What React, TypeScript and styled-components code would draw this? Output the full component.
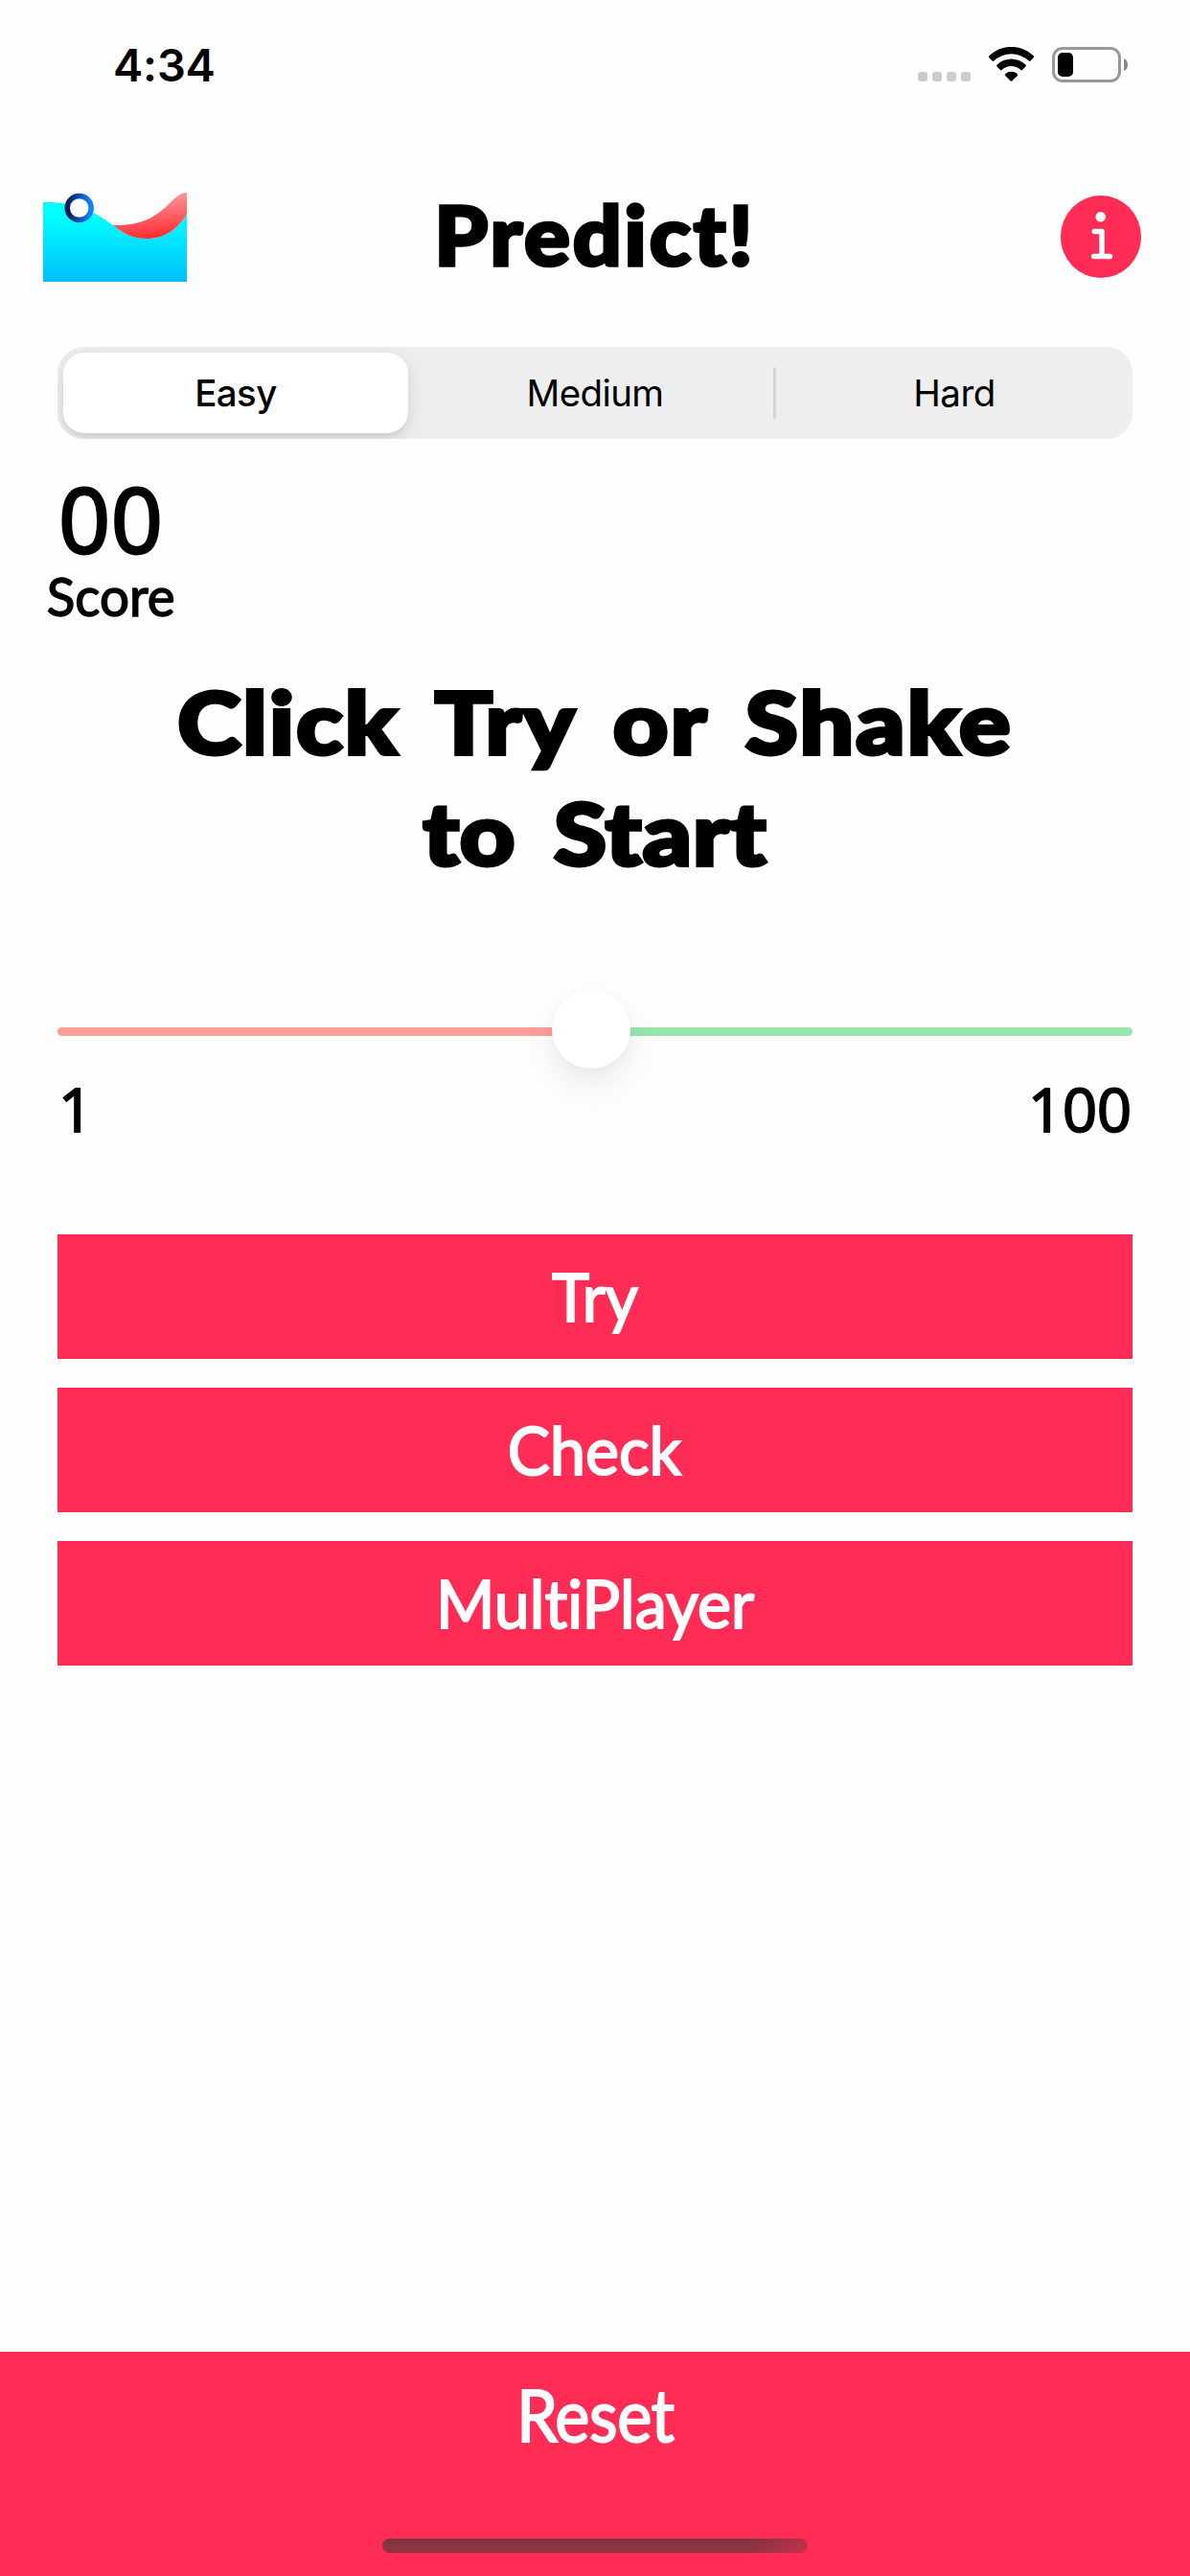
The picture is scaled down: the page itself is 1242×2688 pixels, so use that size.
import React, { useState } from "react";
import styled, { createGlobalStyle } from "styled-components";

const pink = "#ff2d55";

const GlobalStyle = createGlobalStyle`
  * { box-sizing: border-box; }
  body { margin: 0; background: #fff; }
`;

const Screen = styled.div`
  width: 1242px;
  height: 2688px;
  display: flex;
  flex-direction: column;
  overflow: hidden;
  background: #fefefe;
  color: #000;
  font-family: Lato, "Open Sans", sans-serif;
  font-variant-ligatures: none;
`;

const StatusBar = styled.div`
  height: 135px;
  flex: none;
  padding: 0 64px 0 118px;
  display: flex;
  align-items: center;
  justify-content: space-between;
`;

const Time = styled.span`
  font: 600 47px/56px Inter, sans-serif;
  letter-spacing: -0.2px;
`;

const Header = styled.header`
  height: 224px;
  flex: none;
  padding: 0 51px 0 45px;
  display: grid;
  grid-template-columns: 150px 1fr 84px;
  align-items: center;
`;

const Title = styled.h1`
  margin: 0;
  padding: 0 0 6px 0;
  text-align: center;
  font-weight: 900;
  font-size: 86px;
  line-height: 100px;
  letter-spacing: 2.7px;
  -webkit-text-stroke: 3.5px #000;
  transform: translateX(-30px) scaleX(1.04);
`;

const Segments = styled.div`
  margin: 3px 60px 0;
  height: 96px;
  flex: none;
  padding: 6px;
  display: grid;
  grid-template-columns: 360px 381px 3px 366px;
  align-items: center;
  border-radius: 27px;
  background: #eee;
  overflow: hidden;
`;

const Segment = styled.button<{ $active?: boolean; $inset?: number }>`
  height: 84px;
  padding: 0 0 0 ${(p) => p.$inset ?? 0}px;
  border: 0;
  border-radius: 22px;
  background: ${(p) => (p.$active ? "#fff" : "transparent")};
  box-shadow: ${(p) => (p.$active ? "0 6px 18px rgba(0,0,0,.12), 0 4px 4px rgba(0,0,0,.04)" : "none")};
  font: ${(p) => (p.$active ? 500 : 400)} 38.5px/48px Inter, sans-serif;
  letter-spacing: -0.6px;
  color: #000;
`;

const Divider = styled.span`
  width: 3px;
  height: 54px;
  border-radius: 2px;
  background: #d5d5d5;
`;

const ScoreBox = styled.section`
  margin: 33px 0 0 36px;
  width: 160px;
  flex: none;
  display: flex;
  flex-direction: column;
  align-items: center;
`;

const ScoreValue = styled.span`
  font-family: "Open Sans", sans-serif;
  font-weight: 500;
  font-size: 94px;
  line-height: 100px;
  letter-spacing: 1px;
  -webkit-text-stroke: 3px #000;
`;

const ScoreLabel = styled.span`
  font-size: 57px;
  line-height: 60px;
  -webkit-text-stroke: 1.5px #000;
  transform: scaleX(0.96);
`;

const Prompt = styled.h2`
  margin: 43px 0 0;
  flex: none;
  text-align: center;
  font-weight: 900;
  font-size: 90px;
  line-height: 116px;
  word-spacing: 13px;
  -webkit-text-stroke: 4px #000;
`;

const PromptLine = styled.span<{ $spacing: number }>`
  display: block;
  letter-spacing: ${(p) => p.$spacing}px;
  transform: scaleX(1.11);
`;

const Slider = styled.div`
  margin: 107px 60px 0;
  height: 82px;
  flex: none;
  display: flex;
  align-items: center;
`;

const Track = styled.div<{ $color: string; $left?: boolean }>`
  height: 9px;
  margin-top: 4px;
  flex: ${(p) => (p.$left ? "0 0 520px" : "1")};
  border-radius: ${(p) => (p.$left ? "5px 0 0 5px" : "0 5px 5px 0")};
  background: ${(p) => p.$color};
`;

const Thumb = styled.div`
  width: 82px;
  height: 82px;
  flex: none;
  margin: 0 -4px;
  position: relative;
  border-radius: 50%;
  background: #fff;
  box-shadow: 0 18px 38px rgba(0, 0, 0, 0.08), 0 2px 10px rgba(0, 0, 0, 0.04);
`;

const Range = styled.div`
  margin: 4px 61px 0 61px;
  height: 76px;
  flex: none;
  display: flex;
  justify-content: space-between;
  font-family: "Open Sans", sans-serif;
  font-weight: 500;
  font-size: 63px;
  line-height: 76px;
  -webkit-text-stroke: 2px #000;
`;

const Actions = styled.div`
  margin: 93px 60px 0;
  flex: none;
  display: flex;
  flex-direction: column;
  gap: 30px;
`;

const Action = styled.button`
  height: 130px;
  padding: 0;
  border: 0;
  background: ${pink};
  color: #fff;
  font: 400 69px/80px Lato, sans-serif;
  font-variant-ligatures: none;
  -webkit-text-stroke: 2px #fff;
`;

const ActionLabel = styled.span`
  display: inline-block;
  transform: scaleX(0.96);
`;

const Footer = styled.footer`
  margin-top: auto;
  height: 234px;
  flex: none;
  display: flex;
  flex-direction: column;
  align-items: center;
  background: ${pink};
`;

const Reset = styled.button`
  height: 130px;
  padding: 0;
  border: 0;
  background: none;
  color: #fff;
  font: 400 76px/90px Lato, sans-serif;
  letter-spacing: -0.5px;
  -webkit-text-stroke: 2px #fff;
  transform: scaleX(0.9);
`;

const HomeIndicator = styled.div`
  width: 444px;
  height: 15px;
  margin-top: 65px;
  border-radius: 8px;
  background: linear-gradient(100deg, transparent 86%, rgba(255, 45, 85, 0.5) 100%),
    linear-gradient(#783540, #953345);
`;

const StatusIcons = () => (
  <svg width="220" height="37" viewBox="958 49 220 37">
    {[958, 973, 988, 1003].map((x) => (
      <rect key={x} x={x} y="75" width="10" height="10" rx="3" fill="#ccc" />
    ))}
    <path d="M1032.3 58.2Q1031.3 59.2 1032.3 60.2L1035.6 63.6Q1036.4 64.4 1037.2 63.6A26.5 26.5 0 0 1 1073.8 63.6Q1074.600 64.4 1075.4 63.6L1078.700 60.2Q1079.700 59.2 1078.700 58.2A33.500 33.500 0 0 0 1032.3 58.2Z" />
    <path d="M1040.600 67.500Q1039.600 68.500 1040.600 69.500L1044 73Q1044.800 73.800 1045.600 73A14.500 14.500 0 0 1 1065.400 73Q1066.200 73.800 1067 73L1070.400 69.500Q1071.400 68.500 1070.400 67.500A21.500 21.500 0 0 0 1040.600 67.500Z" />
    <path d="M1049.200 77Q1048.400 78 1049.200 78.900L1054.700 84.400Q1055.500 85.200 1056.300 84.400L1061.800 78.900Q1062.600 78 1061.800 77A10 10 0 0 0 1049.200 77Z" />
    <rect x="1099.500" y="50.500" width="69" height="34" rx="9.500" fill="none" stroke="#999" strokeWidth="3" />
    <rect x="1104" y="55" width="16" height="25" rx="5" />
    <path d="M1173 61Q1177 63 1177 67.500T1173 74Z" fill="#888" />
  </svg>
);

const Logo = () => (
  <svg width="150" height="93" viewBox="45 201 150 93">
    <defs>
      <linearGradient id="sea" x1="0" y1="0" x2="0" y2="1">
        <stop offset=".15" stopColor="#0ff" />
        <stop offset="1" stopColor="#00c0ff" />
      </linearGradient>
      <linearGradient id="sail" x1=".35" y1=".15" x2=".5" y2="1">
        <stop offset="0" stopColor="#ff9094" />
        <stop offset="1" stopColor="#ff2a2e" />
      </linearGradient>
      <linearGradient id="ring" x1="0" y1="0" x2="1" y2="0">
        <stop offset=".05" stopColor="#00205a" />
        <stop offset=".95" stopColor="#1482ff" />
      </linearGradient>
    </defs>
    <path d="M45 211C72 210.500 92 216 118 235C129 244 139 249 153 249C172 249 186 239 195 223V294H45Z" fill="url(#sea)" />
    <path d="M118 235C143 236 158 229 172 217C182 207 188 201 195 201V223C186 239 172 249 153 249C139 249 129 244 118 235Z" fill="url(#sail)" />
    <circle cx="82.700" cy="217" r="12.500" fill="#fff" stroke="url(#ring)" strokeWidth="5.500" />
  </svg>
);

const InfoIcon = () => (
  <svg width="84" height="86" viewBox="1107 204 84 86">
    <ellipse cx="1149" cy="247" rx="42" ry="43" fill={pink} />
    <circle cx="1148.700" cy="226.300" r="5.200" fill="#fff" />
    <path d="M1142.300 241.500H1150V267.500M1141.700 267.500H1158.500" fill="none" stroke="#fff" strokeWidth="5.500" strokeLinecap="round" strokeLinejoin="round" />
  </svg>
);

export default function App() {
  const [level, setLevel] = useState("Easy");
  return (
    <>
      <GlobalStyle />
      <Screen>
        <StatusBar>
          <Time>4:34</Time>
          <StatusIcons />
        </StatusBar>
        <Header>
          <Logo />
          <Title>Predict!</Title>
          <InfoIcon />
        </Header>
        <Segments>
          <Segment $active={level === "Easy"} onClick={() => setLevel("Easy")}>Easy</Segment>
          <Segment $inset={9} $active={level === "Medium"} onClick={() => setLevel("Medium")}>Medium</Segment>
          <Divider />
          <Segment $inset={6} $active={level === "Hard"} onClick={() => setLevel("Hard")}>Hard</Segment>
        </Segments>
        <ScoreBox>
          <ScoreValue>00</ScoreValue>
          <ScoreLabel>Score</ScoreLabel>
        </ScoreBox>
        <Prompt>
          <PromptLine $spacing={2}>Click Try or Shake</PromptLine>
          <PromptLine $spacing={1}>to Start</PromptLine>
        </Prompt>
        <Slider>
          <Track $left $color="#ff9d97" />
          <Thumb />
          <Track $color="#9ae4ad" />
        </Slider>
        <Range>
          <span>1</span>
          <span>100</span>
        </Range>
        <Actions>
          {["Try", "Check", "MultiPlayer"].map((label) => (
            <Action key={label}>
              <ActionLabel>{label}</ActionLabel>
            </Action>
          ))}
        </Actions>
        <Footer>
          <Reset>Reset</Reset>
          <HomeIndicator />
        </Footer>
      </Screen>
    </>
  );
}
